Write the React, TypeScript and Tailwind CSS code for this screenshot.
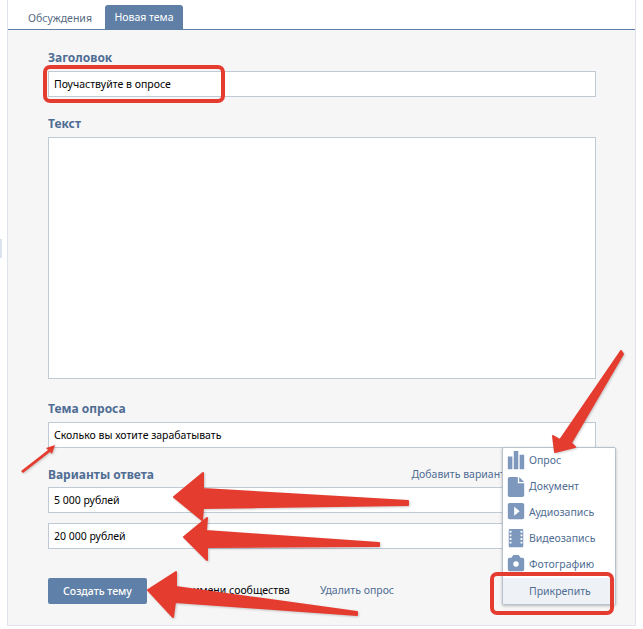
const font = "font-['Noto_Sans',sans-serif]";

function Label({ children }: { children: React.ReactNode }) {
  return <div className="text-[12px] leading-[16px] font-bold text-[#4f6d93]">{children}</div>;
}

function Field({ value, className = '' }: { value: string; className?: string }) {
  return (
    <div className={`h-[26px] w-[548px] border border-[#c0cad5] bg-white pl-[5px] text-[10.5px] leading-[24px] text-black ${className}`}>
      {value}
    </div>
  );
}

const items = [
  { label: 'Опрос', icon: <path d="M0 6h5v14H0zM6.500 0h5v20h-5zM13 4h5v16h-5z" /> },
  { label: 'Документ', icon: <path d="M2 0h9v7h7v13a2 2 0 0 1-2 2H2a2 2 0 0 1-2-2V2a2 2 0 0 1 2-2zM12.500 0 18 5.500h-5.500z" /> },
  { label: 'Аудиозапись', icon: <path fillRule="evenodd" d="M2 0h14a2 2 0 0 1 2 2v14a2 2 0 0 1-2 2H2a2 2 0 0 1-2-2V2a2 2 0 0 1 2-2zM7 4v10l6-5z" /> },
  { label: 'Видеозапись', icon: <path transform="translate(1 0)" fillRule="evenodd" d="M1 0h14a1 1 0 0 1 1 1v18a1 1 0 0 1-1 1H1a1 1 0 0 1-1-1V1a1 1 0 0 1 1-1zM1 2v2h2V2zM1 6v2h2V6zM1 10v2h2v-2zM1 14v2h2v-2zM13 2v2h2V2zM13 6v2h2V6zM13 10v2h2v-2zM13 14v2h2v-2z" /> },
  { label: 'Фотографию', icon: <path fillRule="evenodd" d="M6 0h6l2 3h2a2 2 0 0 1 2 2v11a2 2 0 0 1-2 2H2a2 2 0 0 1-2-2V5a2 2 0 0 1 2-2h2zM9 7a3 3 0 1 0 0 6 3 3 0 0 0 0-6z" /> },
];

export default function App() {
  return (
    <div className={`relative h-[629px] w-[643px] overflow-hidden bg-white ${font}`}>
      <div className="ml-[7px] flex h-[626px] w-[629px] flex-col border-x border-b border-[#dfe3ec] bg-[#f6f6f7]">
        <div className="flex h-[30px] items-end gap-[11px] border-b border-[#5f7fa6] bg-white pl-[20px] text-[10.5px]">
          <div className="h-[23px] w-[66px] leading-[24px] text-[#566a82]">Обсуждения</div>
          <div className="h-[24px] w-[78px] rounded-t-[3px] bg-[#5f7fa6] text-center leading-[25px] text-white">Новая тема</div>
        </div>

        <div className="flex flex-col px-[40px] pt-[20px]">
          <Label>Заголовок</Label>
          <Field value="Поучаствуйте в опросе" className="mt-[5px]" />
          <div className="mt-[19px]"><Label>Текст</Label></div>
          <div className="mt-[5px] h-[242px] w-[548px] border border-[#c0cad5] bg-white" />
          <div className="mt-[22px]"><Label>Тема опроса</Label></div>
          <Field value="Сколько вы хотите зарабатывать" className="mt-[5px]" />
          <div className="mt-[19px] flex items-center justify-between">
            <Label>Варианты ответа</Label>
            <div className="pr-[90px] text-[10.5px] text-[#4f6d93]">Добавить вариант</div>
          </div>
          <Field value="5 000 рублей" className="mt-[4px]" />
          <Field value="20 000 рублей" className="mt-[10px]" />
          <div className="mt-[29px] flex items-center text-[10.5px]">
            <div className="h-[26px] w-[99px] rounded-[2px] bg-[#5f80a8] text-center font-medium leading-[26px] text-white">Создать тему</div>
            <div className="ml-[46px] w-[127px] text-black">имени сообщества</div>
            <div className="text-[#4f6d93]">Удалить опрос</div>
          </div>
        </div>
      </div>

      <div className="absolute left-0 top-[239px] h-[19px] w-[2px] bg-[#dbe3ee]" />

      {/* attach menu */}
      <div className="absolute left-[502px] top-[447px] flex h-[158px] w-[114px] flex-col overflow-hidden rounded-[2px] border border-[#b8c2cf] bg-white shadow-[0_1px_3px_rgba(0,0,0,0.25)]">
        <div className="flex flex-col">
          {items.map((it) => (
            <div key={it.label} className="flex h-[26px] items-center gap-[4px] pl-[4px] text-[10.5px] text-[#4f6d93]">
              <svg width="18" height="20" viewBox="0 0 18 22" fill="#7e98bd" className="shrink-0">{it.icon}</svg>
              {it.label}
            </div>
          ))}
        </div>
        <div className="mt-auto h-[27px] bg-[#eef1f6] pl-[26px] text-[10.5px] leading-[27px] text-[#4f6d93]">Прикрепить</div>
      </div>

      {/* red annotations */}
      <div className="absolute left-[43px] top-[65px] h-[38px] w-[182px] rounded-[7px] border-[4px] border-[#e53c30]" />
      <div className="absolute left-[490px] top-[572px] h-[43px] w-[124px] rounded-[7px] border-[4px] border-[#e53c30]" />
      <svg className="absolute left-0 top-0 drop-shadow-[1px_1px_1px_rgba(0,0,0,0.2)]" width="643" height="629" viewBox="0 0 643 629" fill="#e53c30" stroke="#e53c30" strokeWidth="2" strokeLinejoin="round">
        <polygon points="621,351 623,354 571,443 575,447 555,452 553,436 560,440" />
        <polygon points="174,497 203,473 203,489 408,501 408,505 203,508 202,520" />
        <polygon points="184,537 207,518 206,531 379,543 379,546 207,547 207,560" />
        <polygon points="148,590 176,572 176,587 357,612 357,615 175,602 173,617" />
        <polygon strokeWidth="0" points="21,471 48,450 46,448 55,445 52,454 50,452 23,473" />
      </svg>
    </div>
  );
}
